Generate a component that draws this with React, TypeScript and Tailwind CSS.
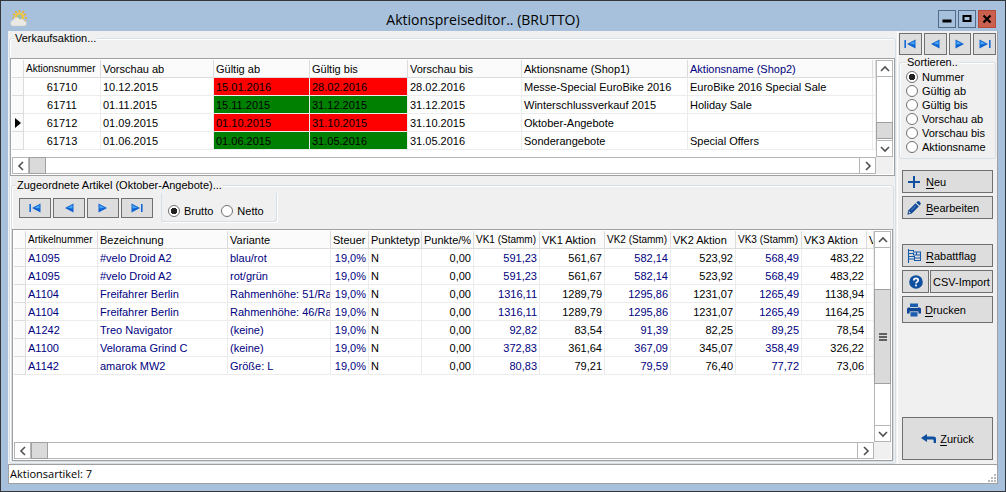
import React, { useState } from "react";

type NavKind = "first" | "prev" | "next" | "last";

const navLabels: Record<NavKind, string> = {
  first: "Erster Datensatz",
  prev: "Vorheriger Datensatz",
  next: "Nächster Datensatz",
  last: "Letzter Datensatz",
};

const navKinds: NavKind[] = ["first", "prev", "next", "last"];

function NavIcon({ kind }: { kind: NavKind }) {
  const left = kind === "first" || kind === "prev";
  const bar = kind === "first" || kind === "last";
  return (
    <svg width="12" height="10" viewBox="0 0 12 10" className={left ? "-scale-x-100" : ""}>
      {bar ? (
        <>
          <path d="M0.5 0.5 9 5 0.5 9.5Z" fill="#0f62d0" />
          <path d="M1.5 2 6.5 4.8 1.5 5.6Z" fill="#45a6f5" />
          <rect x="10" y="1" width="1.6" height="8" fill="#1569d6" />
        </>
      ) : (
        <>
          <path d="M1.5 0.5 10 5 1.5 9.5Z" fill="#0f62d0" />
          <path d="M2.5 2 7.5 4.8 2.5 5.6Z" fill="#45a6f5" />
        </>
      )}
    </svg>
  );
}

function NavButtons({ size }: { size: string }) {
  return (
    <>
      {navKinds.map((k) => (
        <button
          key={k}
          type="button"
          aria-label={navLabels[k]}
          className={"flex items-center justify-center border border-[#707070] bg-[#dddddd] " + size}
        >
          <NavIcon kind={k} />
        </button>
      ))}
    </>
  );
}

function Chevron({ dir }: { dir: "up" | "down" | "left" | "right" }) {
  const d = {
    up: "M1 7 5 3 9 7",
    down: "M1 3 5 7 9 3",
    left: "M7 1 3 5 7 9",
    right: "M3 1 7 5 3 9",
  }[dir];
  return (
    <svg width="10" height="10" viewBox="0 0 10 10" fill="none" stroke="#505050" strokeWidth="1.6">
      <path d={d} />
    </svg>
  );
}

function HScroll() {
  return (
    <div className="flex h-[17px]">
      <div className="flex min-w-0 flex-1 border border-[#b5b5b5] bg-white">
        <button type="button" aria-label="Nach links" className="flex w-4 items-center justify-center border-r border-[#b5b5b5]">
          <Chevron dir="left" />
        </button>
        <div className="-my-px w-[17px] border border-[#a0a0a0] bg-[#dadada]" />
        <div className="flex-1" />
        <button type="button" aria-label="Nach rechts" className="flex w-4 items-center justify-center border-l border-[#b5b5b5]">
          <Chevron dir="right" />
        </button>
      </div>
      <div className="w-[17px] bg-[#f0f0f0]" />
    </div>
  );
}

function VScroll({ before, thumb, after, grip }: { before: string; thumb: string; after: string; grip?: boolean }) {
  return (
    <div className="flex w-[17px] flex-col border border-[#b5b5b5] bg-white">
      <button type="button" aria-label="Nach oben" className="flex h-4 items-center justify-center border-b border-[#b5b5b5]">
        <Chevron dir="up" />
      </button>
      <div className={before} />
      <div className={"-mx-px flex items-center justify-center border border-[#a0a0a0] bg-[#dadada] " + thumb}>
        {grip && (
          <svg width="8" height="8" viewBox="0 0 8 8" fill="#606060">
            <rect width="8" height="2" />
            <rect y="3" width="8" height="2" />
            <rect y="6" width="8" height="2" />
          </svg>
        )}
      </div>
      <div className={after} />
      <button type="button" aria-label="Nach unten" className="flex h-4 items-center justify-center border-t border-[#b5b5b5]">
        <Chevron dir="down" />
      </button>
    </div>
  );
}

const th =
  "h-[18px] overflow-hidden whitespace-nowrap border-r border-b border-[#dcdcdc] bg-[#fbfbfb] p-0 pl-[2px] text-left align-middle font-normal";
const td = "h-[18px] overflow-hidden whitespace-nowrap border-r border-b border-[#ececec] p-0 px-[2px] align-middle";
const marker = "h-[18px] border-r border-b border-[#dcdcdc] bg-[#fbfbfb] p-0 align-middle";

const isTight = (caption: string) => caption.endsWith("nummer") || caption.endsWith("(Stamm)");

function HeaderCell({ caption }: { caption: string }) {
  return <th className={isTight(caption) ? th + " text-[10px]" : th}>{caption}</th>;
}

const actions = [
  { no: "61710", pab: "10.12.2015", ab: "15.01.2016", bis: "28.02.2016", pbis: "28.02.2016", s1: "Messe-Special EuroBike 2016", s2: "EuroBike 2016 Special Sale", red: true },
  { no: "61711", pab: "01.11.2015", ab: "15.11.2015", bis: "31.12.2015", pbis: "31.12.2015", s1: "Winterschlussverkauf 2015", s2: "Holiday Sale", red: false },
  { no: "61712", pab: "01.09.2015", ab: "01.10.2015", bis: "31.10.2015", pbis: "31.10.2015", s1: "Oktober-Angebote", s2: "", red: true },
  { no: "61713", pab: "01.06.2015", ab: "01.06.2015", bis: "31.05.2016", pbis: "31.05.2016", s1: "Sonderangebote", s2: "Special Offers", red: false },
];

function ActionTable() {
  return (
    <table className="w-full table-fixed border-separate border-spacing-0">
      <colgroup>
        <col className="w-[12px]" />
        <col className="w-[77px]" />
        <col className="w-[113px]" />
        <col className="w-[96px]" />
        <col className="w-[98px]" />
        <col className="w-[114px]" />
        <col className="w-[166px]" />
        <col className="w-[185px]" />
        <col />
      </colgroup>
      <thead>
        <tr>
          <th className={marker} />
          {["Aktionsnummer", "Vorschau ab", "Gültig ab", "Gültig bis", "Vorschau bis", "Aktionsname (Shop1)"].map((h) => (
            <HeaderCell key={h} caption={h} />
          ))}
          <th className={th + " text-[#000080]"}>Aktionsname (Shop2)</th>
          <th className={th} />
        </tr>
      </thead>
      <tbody>
        {actions.map((a) => {
          const mark = a.red ? "bg-[#ff0000]" : "bg-[#008000]";
          return (
            <tr key={a.no}>
              <td className={marker}>
                {a.no === "61712" && (
                  <svg width="6" height="10" viewBox="0 0 6 10" className="ml-[3px] block">
                    <path d="M0 0 6 5 0 10Z" fill="#000" />
                  </svg>
                )}
              </td>
              <td className={td + " text-center"}>{a.no}</td>
              <td className={td}>{a.pab}</td>
              <td className={td + " " + mark}>{a.ab}</td>
              <td className={td + " " + mark}>{a.bis}</td>
              <td className={td}>{a.pbis}</td>
              <td className={td}>{a.s1}</td>
              <td className={td}>{a.s2}</td>
              <td className={td} />
            </tr>
          );
        })}
      </tbody>
    </table>
  );
}

const articles = [
  ["A1095", "#velo Droid A2", "blau/rot", "591,23", "561,67", "582,14", "523,92", "568,49", "483,22"],
  ["A1095", "#velo Droid A2", "rot/grün", "591,23", "561,67", "582,14", "523,92", "568,49", "483,22"],
  ["A1104", "Freifahrer Berlin", "Rahmenhöhe: 51/Ra", "1316,11", "1289,79", "1295,86", "1231,07", "1265,49", "1138,94"],
  ["A1104", "Freifahrer Berlin", "Rahmenhöhe: 46/Ra", "1316,11", "1289,79", "1295,86", "1231,07", "1265,49", "1164,25"],
  ["A1242", "Treo Navigator", "(keine)", "92,82", "83,54", "91,39", "82,25", "89,25", "78,54"],
  ["A1100", "Velorama Grind C", "(keine)", "372,83", "361,64", "367,09", "345,07", "358,49", "326,22"],
  ["A1142", "amarok MW2", "Größe: L", "80,83", "79,21", "79,59", "76,40", "77,72", "73,06"],
];

function ArticleTable() {
  return (
    <table className="w-full table-fixed border-separate border-spacing-0">
      <colgroup>
        <col className="w-[12px]" />
        <col className="w-[72px]" />
        <col className="w-[130px]" />
        <col className="w-[103px]" />
        <col className="w-[38px]" />
        <col className="w-[53px]" />
        <col className="w-[52px]" />
        <col className="w-[66px]" />
        <col className="w-[65px]" />
        <col className="w-[66px]" />
        <col className="w-[65px]" />
        <col className="w-[66px]" />
        <col className="w-[65px]" />
        <col />
      </colgroup>
      <thead>
        <tr>
          <th className={marker} />
          {["Artikelnummer", "Bezeichnung", "Variante", "Steuer", "Punktetyp", "Punkte/%", "VK1 (Stamm)", "VK1 Aktion", "VK2 (Stamm)", "VK2 Aktion", "VK3 (Stamm)", "VK3 Aktion", "V"].map((h) => (
            <HeaderCell key={h} caption={h} />
          ))}
        </tr>
      </thead>
      <tbody>
        {articles.map((r, i) => (
          <tr key={i}>
            <td className={marker} />
            {r.slice(0, 3).map((c, j) => (
              <td key={j} className={td + " text-[#000080]"}>{c}</td>
            ))}
            <td className={td + " text-right text-[#000080]"}>19,0%</td>
            <td className={td}>N</td>
            <td className={td + " text-right"}>0,00</td>
            {r.slice(3).map((c, j) => (
              <td key={j} className={td + " text-right" + (j % 2 === 0 ? " text-[#000080]" : "")}>{c}</td>
            ))}
            <td className={td} />
          </tr>
        ))}
      </tbody>
    </table>
  );
}

function Radio({ name, label, checked, onSelect }: { name: string; label: string; checked: boolean; onSelect: () => void }) {
  return (
    <label className="flex h-[14px] items-center gap-1 whitespace-nowrap">
      <input
        type="radio"
        name={name}
        checked={checked}
        onChange={onSelect}
        className="size-3 shrink-0 appearance-none rounded-full border border-[#707070] bg-white checked:bg-[radial-gradient(circle,#222_0,#222_3px,#fff_3.5px)]"
      />
      {label}
    </label>
  );
}

const group = "min-w-0 rounded-[3px] border border-[#d5dfe5] shadow-[inset_1px_1px_0_#fff]";
const legend = "h-[15px] bg-[#f0f0f0] px-px leading-[15px]";
const btn = "flex items-center border border-[#707070] bg-[#dddddd] whitespace-nowrap";

function Hot({ text }: { text: string }) {
  return (
    <span>
      <u className="underline-offset-2">{text[0]}</u>
      {text.slice(1)}
    </span>
  );
}

function Sidebar() {
  const [sort, setSort] = useState("Nummer");
  return (
    <aside className="flex w-[101px] shrink-0 flex-col border-r border-l border-r-[#a0a0a0] border-l-white pt-[2px] pb-1">
      <div className="mx-px grid grid-cols-4 gap-[2px]">
        <NavButtons size="h-[22px]" />
      </div>
      <fieldset className={group + " mx-px pb-1 pl-[6px]"}>
        <legend className={legend}>Sortieren..</legend>
        <div className="flex flex-col">
          {["Nummer", "Gültig ab", "Gültig bis", "Vorschau ab", "Vorschau bis", "Aktionsname"].map((s) => (
            <Radio key={s} name="sort" label={s} checked={sort === s} onSelect={() => setSort(s)} />
          ))}
        </div>
      </fieldset>
      <div className="mx-1 mt-[11px] flex flex-col gap-[3px]">
        <button type="button" className={btn + " h-[23px] gap-[6px] pl-[5px]"}>
          <svg width="12" height="12" viewBox="0 0 12 12" fill="#10509f">
            <path d="M5 0H7V5H12V7H7V12H5V7H0V5H5Z" />
          </svg>
          <Hot text="Neu" />
        </button>
        <button type="button" className={btn + " h-[23px] gap-[5px] pl-[4px]"}>
          <svg width="14" height="14" viewBox="0 0 14 14" fill="#0d4796">
            <path d="M0.3 13.7 1.5 9.3 8.6 2.2 11.8 5.4 4.7 12.5Z" />
            <path d="M9.4 1.4 10.5 0.4Q11.3-.2 12.2.5L13.4 1.7Q14.1 2.6 13.4 3.5L12.5 4.6Z" />
            <path d="M1.6 12.4 2.3 10.2 3.8 11.7Z" fill="#dddddd" />
            <path d="M4 9.5 9 4.5" stroke="#6b9bd6" strokeWidth="0.9" />
          </svg>
          <Hot text="Bearbeiten" />
        </button>
      </div>
      <div className="mx-1 mt-[25px] flex flex-col gap-[3px]">
        <button type="button" className={btn + " h-[23px] gap-[5px] pl-[4px]"}>
          <svg width="14" height="14" viewBox="0 0 14 14" fill="none" stroke="#155aab" strokeWidth="1.1">
            <path d="M1.5 0V14M1.5 1.5H6.5V3H13.5V11.5H7.5V10H1.5M1.5 4.5H6.5V6H10M1.5 7.5H7.5V9H13.5M9.5 3V6H13.5" />
          </svg>
          <Hot text="Rabattflag" />
        </button>
        <div className="flex gap-px">
          <button type="button" aria-label="Hilfe" className={btn + " h-[23px] w-[27px] justify-center"}>
            <svg width="14" height="14" viewBox="0 0 14 14">
              <circle cx="7" cy="7" r="6.8" fill="#0f4f9f" />
              <path d="M4.8 5.4Q4.8 3.4 7 3.4T9.2 5.3Q9.2 6.3 8 7 7 7.5 7 8.6" fill="none" stroke="#fff" strokeWidth="1.7" />
              <rect x="6.1" y="9.6" width="1.8" height="1.7" fill="#fff" />
            </svg>
          </button>
          <button type="button" className={btn + " h-[23px] flex-1 justify-center"}>
            CSV-Import
          </button>
        </div>
        <button type="button" className={btn + " h-[27px] gap-[4px] pl-[4px]"}>
          <svg width="14" height="14" viewBox="0 0 14 14">
            <rect x="3" y="0.5" width="8" height="4" fill="#1a5cae" />
            <path d="M1.5 4.5H12.5Q14 4.5 14 6V10.5H0V6Q0 4.5 1.5 4.5Z" fill="#0d4796" />
            <rect x="3" y="4" width="8" height="0.9" fill="#dddddd" />
            <rect x="2.6" y="8.4" width="8.8" height="5.4" fill="#dddddd" />
            <rect x="3.5" y="9.2" width="7" height="4.3" fill="#1a5cae" />
          </svg>
          <Hot text="Drucken" />
        </button>
      </div>
      <button type="button" className={btn + " mx-1 mt-auto h-[43px] justify-center gap-1"}>
        <svg width="15" height="9" viewBox="0 0 15 9" fill="#0f4f9f">
          <path d="M0 4 6 0V2.6H12Q15 2.6 15 5V9H12.6V6.2Q12.6 5.4 11.6 5.4H6V8Z" />
        </svg>
        <Hot text="Zurück" />
      </button>
    </aside>
  );
}

export default function App() {
  const [mode, setMode] = useState("Brutto");
  return (
    <div className="flex h-screen min-h-[480px] min-w-[640px] flex-col border border-[#33363b] bg-[#a7c0dc] px-[7px] pb-[7px] font-['Liberation_Sans',Arial,sans-serif] text-[11px] leading-[14px] text-black">
      <header className="grid h-[30px] shrink-0 grid-cols-[auto_1fr_auto] items-center">
        <svg width="18" height="18" viewBox="0 0 18 18" className="mt-1 ml-[2px]">
          <g stroke="#f3b21b" strokeWidth="1.5">
            <path d="M9.5 1V3M5.5 2 6.5 4M13.5 2 12.5 4M3.2 5 5 6M15.8 5 14 6M2.5 8.5H4M15 9H17M16 12.5 14.5 11.5" />
          </g>
          <circle cx="9.5" cy="8" r="4.6" fill="#f6c73c" />
          <circle cx="9.5" cy="8" r="2.6" fill="#9fc0a8" />
          <path d="M3.5 17Q.5 17 .5 14.2T3.3 11.2Q3.8 8.6 6.6 8.6 8.8 8.6 9.8 10.5 11 9.6 12.6 10.2 14 10.7 14.2 12 16.5 12 16.5 14.4T14 17Z" fill="#ebe9e4" stroke="#d2cfc8" strokeWidth="0.5" />
        </svg>
        <h1 className="pt-2 text-center font-['Open_Sans','Segoe_UI',sans-serif] text-[14px] leading-[20px]">Aktionspreiseditor.. (BRUTTO)</h1>
        <div className="mr-[2px] flex justify-end gap-[2px] pt-[6px]">
          <button type="button" aria-label="Minimieren" className="flex size-[18px] items-center justify-center border border-[#536b8a]">
            <svg width="10" height="10" viewBox="0 0 10 10"><rect x="0.5" y="5.5" width="9" height="3" /></svg>
          </button>
          <button type="button" aria-label="Maximieren" className="flex size-[18px] items-center justify-center border border-[#536b8a]">
            <svg width="10" height="10" viewBox="0 0 10 10"><rect x="1.5" y="2" width="7" height="5" fill="none" stroke="#000" strokeWidth="2" /></svg>
          </button>
          <button type="button" aria-label="Schließen" className="flex size-[18px] items-center justify-center border border-[#b84a3c] bg-[#cb604f]">
            <svg width="10" height="10" viewBox="0 0 10 10"><path d="M1.5 1.5 8.5 8.5M8.5 1.5 1.5 8.5" stroke="#000" strokeWidth="2.2" /></svg>
          </button>
        </div>
      </header>

      <main className="flex min-h-0 flex-1 bg-[#f0f0f0]">
        <fieldset className={group + " mx-px flex flex-1 flex-col pb-px"}>
          <legend className={legend + " ml-1"}>Verkaufsaktion...</legend>
          <div className="mt-3 flex flex-col border border-[#a0a0a0] bg-white p-px">
            <div className="flex h-[97px]">
              <div className="min-w-0 flex-1 overflow-hidden">
                <ActionTable />
              </div>
              <VScroll before="flex-1" thumb="h-[17px]" after="h-px" />
            </div>
            <HScroll />
          </div>

          <fieldset className={group + " mx-px mt-[2px] flex min-h-0 flex-1 flex-col"}>
            <legend className={legend + " ml-1"}>Zugeordnete Artikel (Oktober-Angebote)...</legend>
            <div className="flex h-9 shrink-0 items-start pl-[7px]">
              <div className="grid grid-cols-4 gap-[2px] pt-[5px]">
                <NavButtons size="h-5 w-8" />
              </div>
              <div className="ml-2 flex h-[29px] items-end gap-2 rounded-b-[3px] border-x border-b border-[#d5dfe5] px-[6px] pb-[3px] pr-3 shadow-[1px_1px_0_#fff]">
                {["Brutto", "Netto"].map((m) => (
                  <Radio key={m} name="mode" label={m} checked={mode === m} onSelect={() => setMode(m)} />
                ))}
              </div>
            </div>
            <div className="flex min-h-0 flex-1 flex-col border border-[#a0a0a0] bg-white p-px">
              <div className="flex min-h-0 flex-1">
                <div className="min-w-0 flex-1 overflow-hidden">
                  <ArticleTable />
                </div>
                <VScroll before="flex-[42]" thumb="flex-[95]" after="flex-[42]" grip />
              </div>
              <HScroll />
            </div>
          </fieldset>
        </fieldset>
        <Sidebar />
      </main>

      <footer className="flex h-5 shrink-0 items-center justify-between border border-[#a0a0a0] bg-white pl-px font-['Open_Sans','Segoe_UI',sans-serif]">
        <span>Aktionsartikel: 7</span>
        <svg width="10" height="10" viewBox="0 0 10 10" fill="#b8b8b8" className="self-end">
          <path d="M7 1h2v2h-2zM7 4h2v2h-2zM4 4h2v2h-2zM7 7h2v2h-2zM4 7h2v2h-2zM1 7h2v2h-2z" />
        </svg>
      </footer>
    </div>
  );
}
